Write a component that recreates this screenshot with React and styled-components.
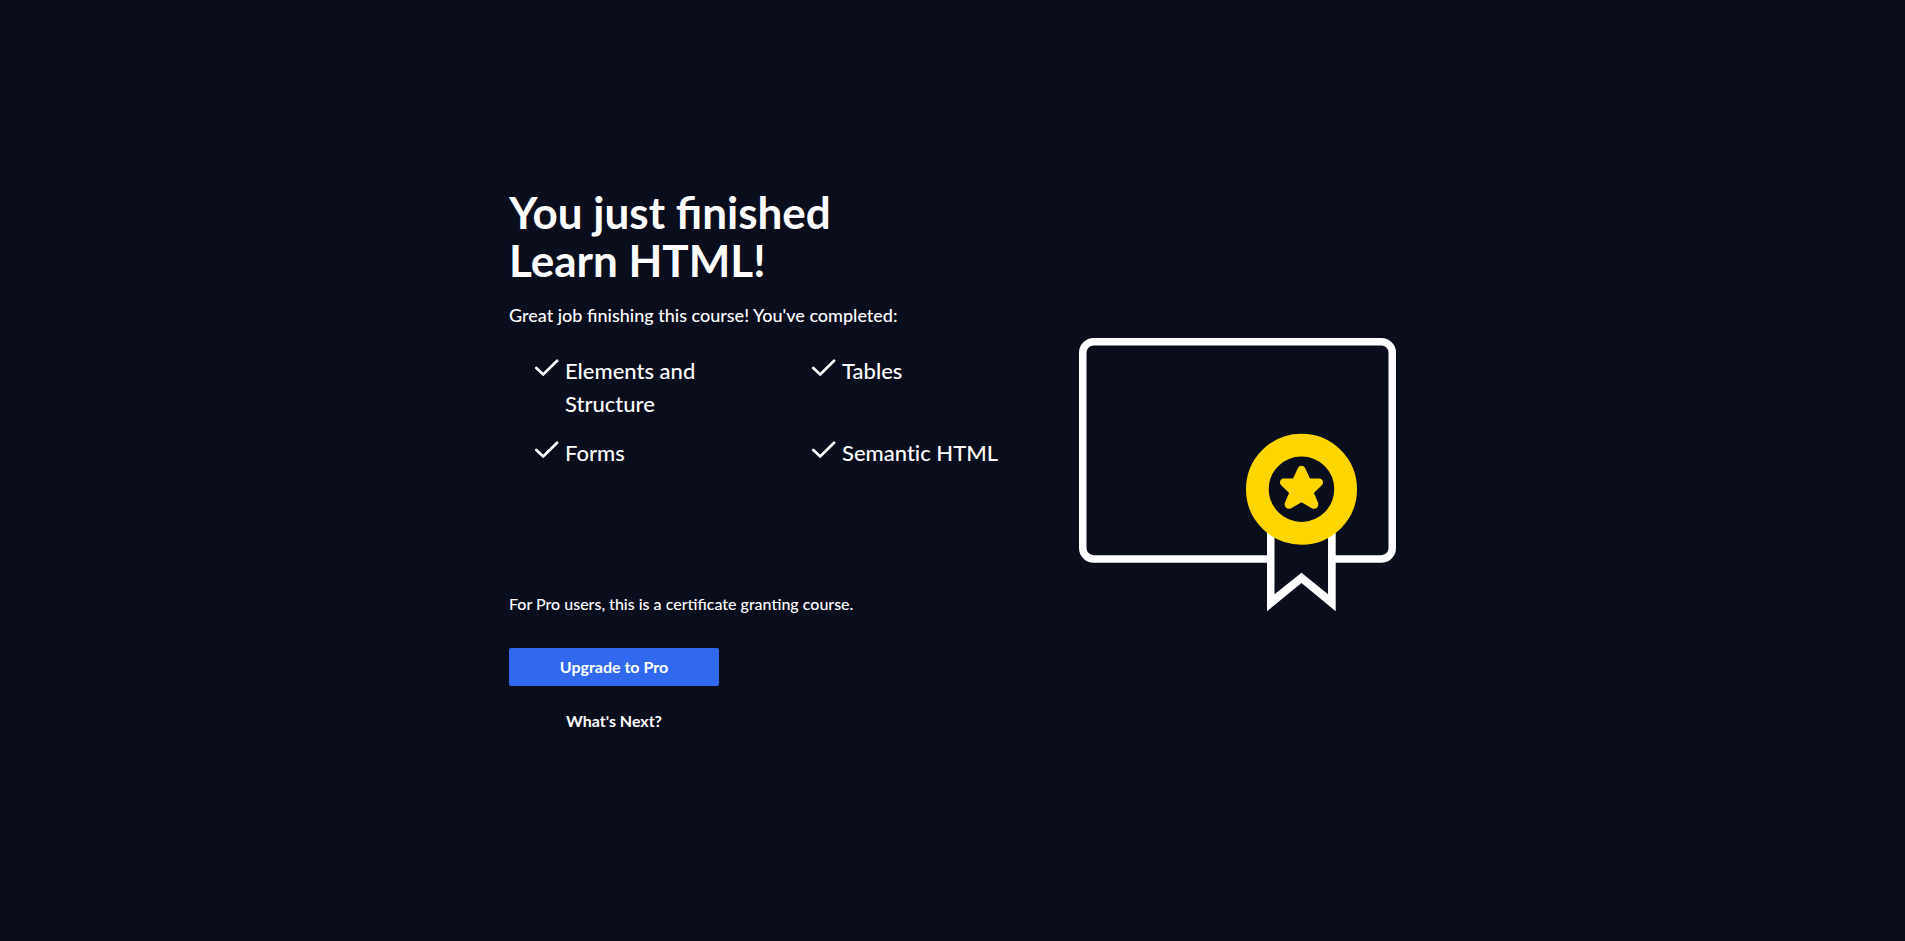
import React from "react";
import styled, { createGlobalStyle } from "styled-components";

const GlobalStyle = createGlobalStyle`
  *, *::before, *::after {
    box-sizing: border-box;
  }
  body {
    margin: 0;
    background: #0a0d1c;
    color: #ffffff;
    font-family: Lato, "Open Sans", sans-serif;
    font-weight: 500;
  }
`;

const Page = styled.main`
  display: flex;
  align-items: center;
  justify-content: center;
  min-height: 100vh;
  padding: 40px 32px 32px;
`;

const Panel = styled.section`
  display: flex;
  align-items: center;
  justify-content: space-between;
  width: 100%;
  max-width: 887px;
`;

const Summary = styled.div`
  flex: 0 1 570px;
  padding-bottom: 22px;
`;

const Title = styled.h1`
  margin: 0;
  font-size: 44px;
  line-height: 48px;
  font-weight: 700;
`;

const Lead = styled.p`
  margin: 18px 0 0;
  font-size: 18px;
  line-height: 26px;
`;

const Topics = styled.ul`
  display: grid;
  grid-template-columns: 1fr 1fr;
  gap: 16px 8px;
  min-height: 238px;
  align-content: start;
  margin: 26px 0 0;
  padding: 0 0 0 24px;
  list-style: none;
`;

const Topic = styled.li`
  display: flex;
  gap: 4px;
  padding-right: 72px;
  font-size: 22px;
  line-height: 33px;
  font-variant-ligatures: none;
  white-space: ${(p) => (p.$nowrap ? "nowrap" : "normal")};
`;

const CheckIcon = styled.svg`
  flex: none;
  width: 28px;
  height: 28px;
`;

const Note = styled.p`
  margin: 0;
  font-size: 16px;
  line-height: 24px;
`;

const Actions = styled.div`
  display: flex;
  flex-direction: column;
  gap: 16px;
  width: 210px;
  margin-top: 32px;
`;

const Action = styled.button`
  height: 38px;
  padding: 0 16px;
  border: 0;
  border-radius: 2px;
  background: ${(p) => (p.$primary ? "#3069f0" : "transparent")};
  color: #ffffff;
  font-family: inherit;
  font-size: 16px;
  line-height: 24px;
  font-weight: 700;
  cursor: pointer;
`;

const Artwork = styled.svg`
  flex: 0 1 317px;
  min-width: 0;
  height: auto;
`;

const topics = [
  { name: "Elements and Structure" },
  { name: "Tables" },
  { name: "Forms" },
  { name: "Semantic HTML", nowrap: true },
];

function Check() {
  return (
    <CheckIcon viewBox="0 0 28 28" fill="none" aria-hidden="true">
      <path
        d="M3.3 14L10.2 20.4L24.1 6.8"
        stroke="#ffffff"
        strokeWidth="2.7"
        strokeLinecap="round"
        strokeLinejoin="miter"
      />
    </CheckIcon>
  );
}

function Certificate() {
  return (
    <Artwork viewBox="0 0 317 274" width="317" role="img" aria-label="Certificate">
      <rect x="3.75" y="3.75" width="309.5" height="217.2" rx="11" fill="none" stroke="#ffffff" strokeWidth="7.5" />
      <path d="M188 180V273.3L222.5 245L256.7 273.3V180Z" fill="#ffffff" />
      <path d="M195.5 180V256.3L222.5 234.7L249 256.3V180Z" fill="#0a0d1c" />
      <circle cx="222.5" cy="151.2" r="44.1" fill="#0a0d1c" stroke="#ffd500" strokeWidth="22.8" />
      <path
        d="M218.8 130.2C220.3 126.9 224.7 126.9 226.2 130.2L231 140.5H240.2C243.8 140.5 245.4 144.8 242.8 147.2L234.9 154.9L239 164.6C240.5 168.7 236.6 172.3 232.8 170.3L222.5 164.2L212.2 170.3C208.4 172.3 204.3 168.7 206 164.6L210.1 154.9L202.2 147.2C199.6 144.8 201.2 140.5 204.8 140.5H214Z"
        fill="#ffd500"
      />
    </Artwork>
  );
}

export default function App() {
  return (
    <>
      <GlobalStyle />
      <Page>
        <Panel>
          <Summary>
            <Title>
              You just finished
              <br />
              Learn HTML!
            </Title>
            <Lead>Great job finishing this course! You've completed:</Lead>
            <Topics>
              {topics.map((topic) => (
                <Topic key={topic.name} $nowrap={topic.nowrap}>
                  <Check />
                  <span>{topic.name}</span>
                </Topic>
              ))}
            </Topics>
            <Note>For Pro users, this is a certificate granting course.</Note>
            <Actions>
              <Action type="button" $primary>
                Upgrade to Pro
              </Action>
              <Action type="button">What's Next?</Action>
            </Actions>
          </Summary>
          <Certificate />
        </Panel>
      </Page>
    </>
  );
}
